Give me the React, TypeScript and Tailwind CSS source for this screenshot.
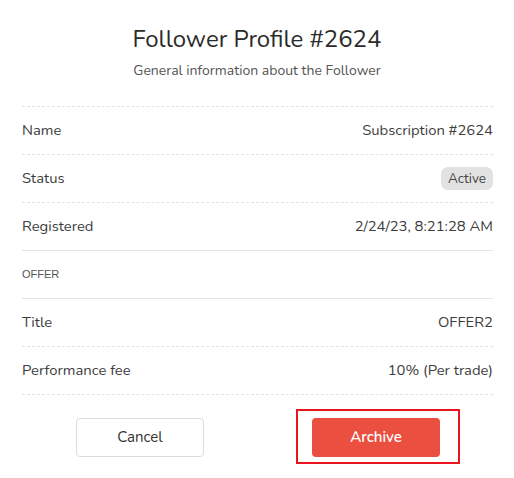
import React from "react";

const font = { fontFamily: "Nunito, Lato, 'Noto Sans', sans-serif" };

function Row({ label, children, border = "dashed" }: { label: string; children: React.ReactNode; border?: "dashed" | "solid" }) {
  return (
    <div
      className={`flex h-[48px] items-center justify-between border-b border-[#e3e3e3] text-[14.8px] text-[#3d3d3d] ${
        border === "dashed" ? "border-dashed" : "border-solid"
      }`}
    >
      <span>{label}</span>
      <span>{children}</span>
    </div>
  );
}

export default function App() {
  return (
    <div className="h-[478px] w-[514px] bg-white" style={font}>
      <div className="flex flex-col items-center pt-[22px]">
        <h1 className="text-[24px] leading-[34px] text-[#2b2b2b]">Follower Profile #2624</h1>
        <p className="mt-[6px] text-[14px] leading-[18px] text-[#555]">General information about the Follower</p>
      </div>
      <div className="mx-[22px] mt-[26px] border-t border-dashed border-[#e3e3e3] w-[471px]">
        <Row label="Name">Subscription #2624</Row>
        <Row label="Status">
          <span className="inline-flex h-[23px] items-center rounded-[7px] bg-[#e2e2e2] px-[7px] text-[13.5px] text-[#444]">Active</span>
        </Row>
        <Row label="Registered" border="solid">2/24/23, 8:21:28 AM</Row>
        <div
          className="flex h-[48px] items-center border-b border-solid border-[#e3e3e3] text-[11px] text-[#555]"
          style={{ fontFamily: "'Liberation Sans', Arial, sans-serif" }}
        >
          OFFER
        </div>
        <Row label="Title">OFFER2</Row>
        <Row label="Performance fee">10% (Per trade)</Row>
      </div>
      <div className="mt-[14px] flex items-start">
        <div className="ml-[76px] mt-[9px] w-[128px]">
          <button className="h-[39px] w-[128px] rounded-[4px] border border-[#dcdcdc] bg-white text-[15px] text-[#333]">
            Cancel
          </button>
        </div>
        <div className="ml-[92px] border-2 border-[#e8141e] pl-[14px] pr-[18px] pt-[7px] pb-[5px]">
          <button className="block h-[39px] w-[128px] rounded-[4px] bg-[#ea4f3f] text-[15px] font-semibold text-white">
            Archive
          </button>
        </div>
      </div>
    </div>
  );
}
